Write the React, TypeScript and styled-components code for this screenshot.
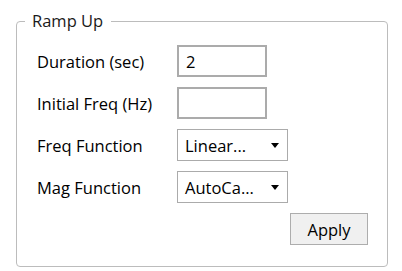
import styled, { createGlobalStyle } from 'styled-components';

const GlobalStyle = createGlobalStyle`
  body {
    margin: 0;
    background: #ffffff;
    font-family: "Open Sans", "Liberation Sans", sans-serif;
  }
`

const Page = styled.div`
  width: 402px;
  height: 271px;
  box-sizing: border-box;
  padding: 11px 14px 4px 16px;
`

const Group = styled.fieldset`
  margin: 0;
  height: 256px;
  box-sizing: border-box;
  border: 1px solid #bcbcbc;
  border-radius: 4px;
  padding: 14px 19px 0 20px;
  display: flex;
  flex-direction: column;
`

const Legend = styled.legend`
  font-size: 16.5px;
  line-height: 20px;
  color: #1a1a1a;
  padding: 0 8px 0 7px;
  margin-left: -12px;
`

const Form = styled.div`
  display: grid;
  grid-template-columns: 140px auto;
  grid-auto-rows: 32px;
  row-gap: 10px;
  align-items: center;
`

const Label = styled.span`
  font-size: 16.5px;
  color: #000;
`

const TextBox = styled.input`
  width: 90px;
  height: 32px;
  box-sizing: border-box;
  border: 2px solid #ababab;
  padding: 0 7px;
  font-family: inherit;
  font-size: 16.5px;
  color: #000;
  outline: none;
`

const Select = styled.div`
  width: 111px;
  height: 32px;
  box-sizing: border-box;
  border: 1px solid #ababab;
  display: flex;
  align-items: center;
  justify-content: space-between;
  padding: 0 8px 0 7px;
  font-size: 16.5px;
  color: #000;
`

const Footer = styled.div`
  display: flex;
  justify-content: flex-end;
  margin-top: 10px;
`

const Button = styled.button`
  width: 78px;
  height: 32px;
  box-sizing: border-box;
  background: #f0f0f0;
  border: 1px solid #adadad;
  font-family: inherit;
  font-size: 16.5px;
  color: #000;
  padding: 0;
`

const Caret = () => (
  <svg width="8" height="5" viewBox="0 0 8 5">
    <path d="M0 0 H8 L4 5 Z" fill="#000" />
  </svg>
);

const App: React.FC = () => {
  return (
    <>
      <GlobalStyle />
      <Page>
        <Group>
          <Legend>Ramp Up</Legend>
          <Form>
            <Label>Duration (sec)</Label>
            <TextBox defaultValue="2" />
            <Label>Initial Freq (Hz)</Label>
            <TextBox defaultValue="" />
            <Label>Freq Function</Label>
            <Select>Linear...<Caret /></Select>
            <Label>Mag Function</Label>
            <Select>AutoCa...<Caret /></Select>
          </Form>
          <Footer>
            <Button>Apply</Button>
          </Footer>
        </Group>
      </Page>
    </>
  );
};

export default App;
